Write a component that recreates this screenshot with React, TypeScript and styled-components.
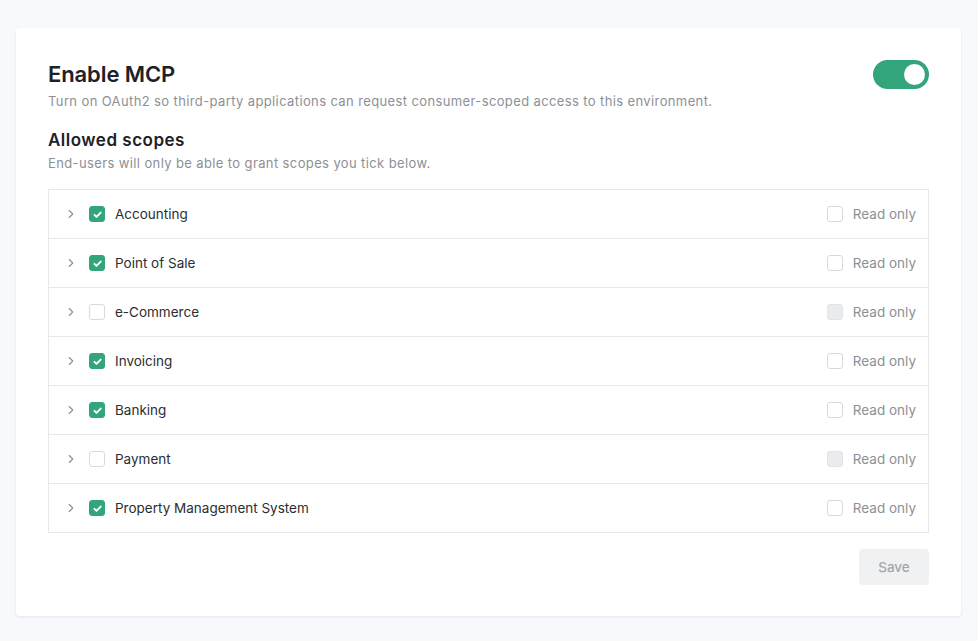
import React, { useState } from "react";
import styled, { createGlobalStyle } from "styled-components";

const GlobalStyle = createGlobalStyle`
  * { box-sizing: border-box; }
  body {
    margin: 0;
    background: #f8f9fc;
    font-family: Inter, "Noto Sans", "Liberation Sans", sans-serif;
    color: #1f2328;
  }
`;

type Scope = { name: string; checked: boolean };

const initialScopes: Scope[] = [
  { name: "Accounting", checked: true },
  { name: "Point of Sale", checked: true },
  { name: "e-Commerce", checked: false },
  { name: "Invoicing", checked: true },
  { name: "Banking", checked: true },
  { name: "Payment", checked: false },
  { name: "Property Management System", checked: true },
];

export default function App() {
  const [enabled, setEnabled] = useState(true);
  const [scopes, setScopes] = useState(initialScopes);

  const toggleScope = (i: number) => {
    setScopes(scopes.map((s, idx) => (idx === i ? { ...s, checked: !s.checked } : s)));
  };

  return (
    <Page>
      <GlobalStyle />
      <Card>
        <Header>
          <div>
            <Title>Enable MCP</Title>
            <Subtitle>
              Turn on OAuth2 so third-party applications can request consumer-scoped access to this environment.
            </Subtitle>
          </div>
          <Toggle $on={enabled} onClick={() => setEnabled(!enabled)}>
            <Knob />
          </Toggle>
        </Header>

        <SectionTitle>Allowed scopes</SectionTitle>
        <Subtitle $gap={2}>End-users will only be able to grant scopes you tick below.</Subtitle>

        <Table>
          {scopes.map((s, i) => (
            <Row key={s.name}>
              <Chevron viewBox="0 0 16 16">
                <path d="M6 4l4 4-4 4" fill="none" stroke="#8a8f98" strokeWidth="1.3" strokeLinecap="round" strokeLinejoin="round" />
              </Chevron>
              <Box $checked={s.checked} onClick={() => toggleScope(i)}>
                {s.checked && (
                  <svg width="11" height="11" viewBox="0 0 10 10">
                    <path d="M2.2 5.3l1.9 1.9 3.8-4" fill="none" stroke="#fff" strokeWidth="1.7" strokeLinecap="round" strokeLinejoin="round" />
                  </svg>
                )}
              </Box>
              <Label>{s.name}</Label>
              <ReadOnly>
                <Box $disabled={!s.checked} />
                <ReadOnlyText>Read only</ReadOnlyText>
              </ReadOnly>
            </Row>
          ))}
        </Table>

        <Footer>
          <SaveButton disabled>Save</SaveButton>
        </Footer>
      </Card>
    </Page>
  );
}

const Page = styled.div`
  padding: 28px 17px 25px 16px;
`;

const Card = styled.div`
  background: #fff;
  border-radius: 4px;
  box-shadow: 0 1px 3px rgba(20, 30, 50, 0.08);
  padding: 32px 32px 31px;
`;

const Header = styled.div`
  display: flex;
  justify-content: space-between;
  align-items: flex-start;
`;

const Title = styled.h1`
  margin: 0;
  font-size: 22px;
  font-weight: 600;
  line-height: 28px;
  color: #1e2126;
  letter-spacing: -0.1px;
`;

const Subtitle = styled.p<{ $gap?: number }>`
  margin: ${(p) => p.$gap ?? 4}px 0 0;
  font-size: 13px;
  line-height: 18px;
  color: #8c9096;
  letter-spacing: 0.38px;
`;

const SectionTitle = styled.h2`
  margin: 18px 0 0;
  font-size: 17px;
  font-weight: 600;
  line-height: 24px;
  color: #1e2126;
  letter-spacing: 0.5px;
`;

const Toggle = styled.div<{ $on: boolean }>`
  width: 56px;
  height: 29px;
  border-radius: 15px;
  background: ${(p) => (p.$on ? "#33a57a" : "#d5d8dd")};
  padding: 4px;
  display: flex;
  justify-content: ${(p) => (p.$on ? "flex-end" : "flex-start")};
  cursor: pointer;
`;

const Knob = styled.div`
  width: 21px;
  height: 21px;
  border-radius: 50%;
  background: #fff;
`;

const Table = styled.div`
  margin-top: 17px;
  border: 1px solid #e6e8eb;
`;

const Row = styled.div`
  box-sizing: content-box;
  height: 48px;
  display: flex;
  align-items: center;
  padding: 0 12px 0 15px;
  & + & {
    border-top: 1px solid #e6e8eb;
  }
`;

const Chevron = styled.svg`
  width: 14px;
  height: 14px;
  margin-right: 11px;
`;

const Box = styled.div<{ $checked?: boolean; $disabled?: boolean }>`
  width: 16px;
  height: 16px;
  border-radius: 3px;
  display: flex;
  align-items: center;
  justify-content: center;
  background: ${(p) => (p.$checked ? "#33a57a" : p.$disabled ? "#e9ebee" : "#fff")};
  border: 1px solid ${(p) => (p.$checked ? "#33a57a" : p.$disabled ? "#e2e4e8" : "#d6d9dd")};
  cursor: pointer;
`;

const Label = styled.span`
  margin-left: 10px;
  font-size: 13.5px;
  color: #2a2e33;
`;

const ReadOnly = styled.div`
  margin-left: auto;
  display: flex;
  align-items: center;
  gap: 10px;
`;

const ReadOnlyText = styled.span`
  font-size: 13.5px;
  color: #8c9096;
`;

const Footer = styled.div`
  display: flex;
  justify-content: flex-end;
  margin-top: 16px;
`;

const SaveButton = styled.button`
  width: 70px;
  height: 36px;
  border: none;
  border-radius: 4px;
  background: #f0f1f3;
  color: #a3a7ad;
  font-family: inherit;
  font-size: 13.5px;
  font-weight: 500;
`;
